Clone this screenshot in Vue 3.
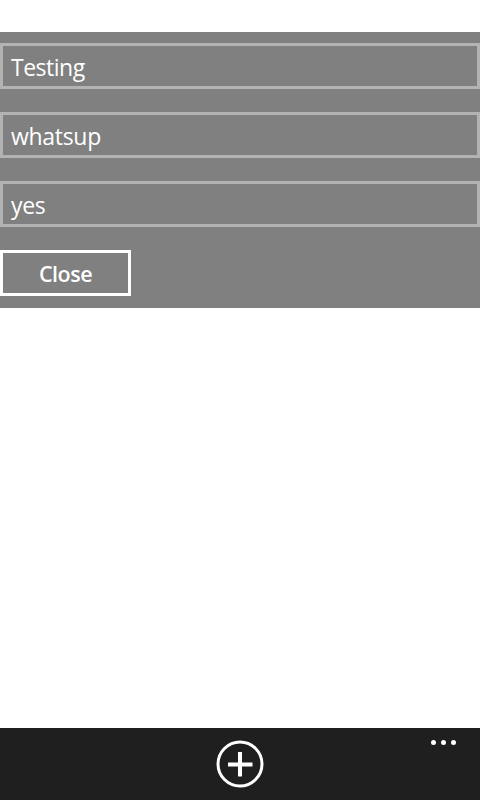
<script setup>
import { ref } from 'vue'

const fields = ref(['Testing', 'whatsup', 'yes'])
</script>

<template>
  <main class="page">
    <section class="popup">
      <div v-for="(text, i) in fields" :key="i" class="field">
        <span :class="'value value-' + i">{{ text }}</span>
      </div>
      <button class="close" type="button"><span>Close</span></button>
    </section>
    <footer class="app-bar">
      <span></span>
      <svg class="add" width="48" height="48" viewBox="0 0 48 48">
        <circle cx="24" cy="24" r="22" fill="none" stroke="#fff" stroke-width="3" />
        <path d="M12 24.4H36.5M24 12V36.5" fill="none" stroke="#fff" stroke-width="4" />
      </svg>
      <svg class="more" width="26" height="6" viewBox="0 0 26 6">
        <circle cx="2.5" cy="3.5" r="2.5" fill="#fff" />
        <circle cx="12.5" cy="3.5" r="2.5" fill="#fff" />
        <circle cx="22.5" cy="3.5" r="2.5" fill="#fff" />
      </svg>
    </footer>
  </main>
</template>

<style>
body {
  background: #fff;
}
</style>

<style scoped>
.page {
  display: flex;
  flex-direction: column;
  box-sizing: border-box;
  height: 800px;
  padding-top: 32px;
  background: #fff;
  font-family: "Open Sans", "Noto Sans", sans-serif;
}
.popup {
  display: flex;
  flex-direction: column;
  gap: 23px;
  box-sizing: border-box;
  height: 276px;
  padding-top: 11px;
  background: #808080;
  color: #fff;
}
.field {
  display: flex;
  align-items: center;
  box-sizing: border-box;
  height: 46px;
  padding: 2px 8px 0 8px;
  border: 3px solid #b3b3b3;
  font-size: 23px;
  line-height: 30px;
}
.value {
  letter-spacing: -0.3px;
}
.value-0 {
  letter-spacing: -0.5px;
}
.close {
  box-sizing: border-box;
  width: 131px;
  height: 46px;
  margin: 0;
  padding: 2px 0 0 0;
  border: 3px solid #fff;
  border-radius: 0;
  background: transparent;
  color: #fff;
  font-family: inherit;
  font-size: 21.5px;
  font-weight: 600;
  line-height: 30px;
  letter-spacing: -0.5px;
}
.app-bar {
  display: grid;
  grid-template-columns: 1fr 48px 1fr;
  height: 72px;
  margin-top: auto;
  background: #1f1f1f;
}
.add {
  margin-top: 12px;
}
.more {
  justify-self: end;
  margin: 11px 23px 0 0;
}
</style>
